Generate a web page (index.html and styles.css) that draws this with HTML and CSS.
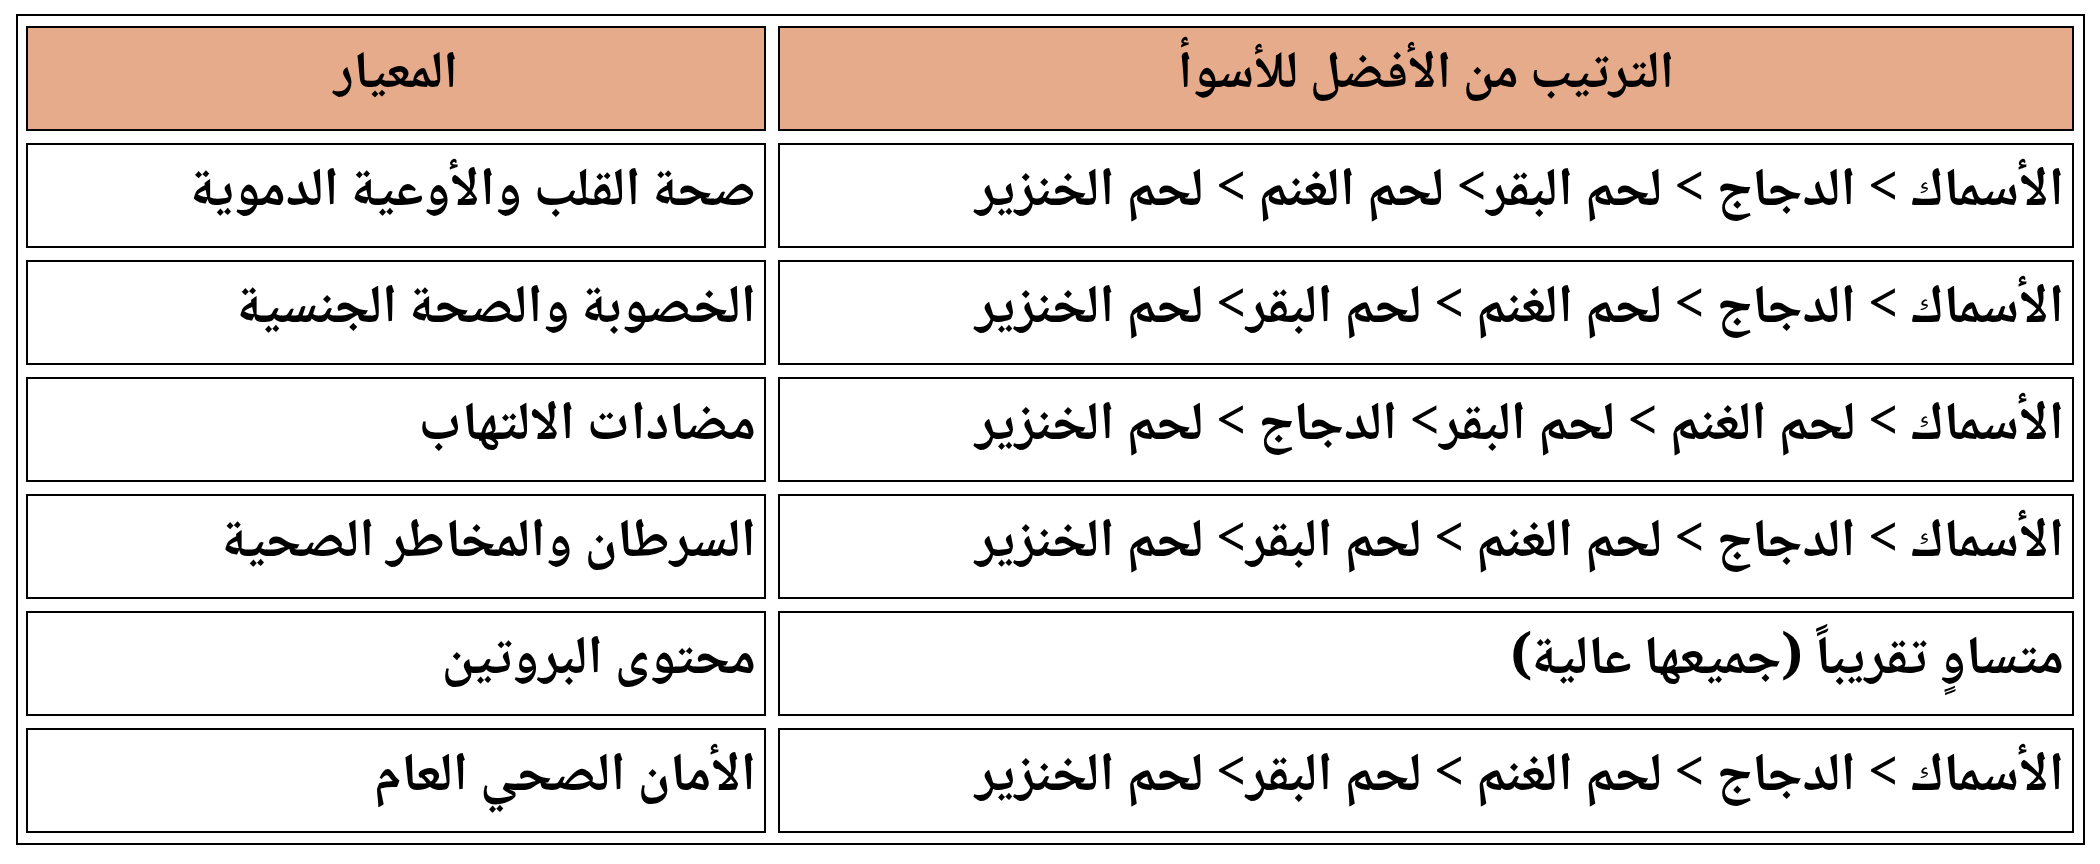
FILE: index.html
```html
<!DOCTYPE html>
<html lang="ar">
<head>
<meta charset="utf-8">
<title>مقارنة اللحوم</title>
<link rel="stylesheet" href="styles.css">
</head>
<body>
<div class="table">
  <div class="cell head">المعيار</div>
  <div class="cell head">الترتيب من الأفضل للأسوأ</div>

  <div class="cell">صحة القلب والأوعية الدموية</div>
  <div class="cell">الأسماك &gt; الدجاج &gt; لحم البقر&gt; لحم الغنم &gt; لحم الخنزير</div>

  <div class="cell">الخصوبة والصحة الجنسية</div>
  <div class="cell">الأسماك &gt; الدجاج &gt; لحم الغنم &gt; لحم البقر&gt; لحم الخنزير</div>

  <div class="cell">مضادات الالتهاب</div>
  <div class="cell">الأسماك &gt; لحم الغنم &gt; لحم البقر&gt; الدجاج &gt; لحم الخنزير</div>

  <div class="cell">السرطان والمخاطر الصحية</div>
  <div class="cell">الأسماك &gt; الدجاج &gt; لحم الغنم &gt; لحم البقر&gt; لحم الخنزير</div>

  <div class="cell">محتوى البروتين</div>
  <div class="cell">متساوٍ تقريباً (جميعها عالية)</div>

  <div class="cell">الأمان الصحي العام</div>
  <div class="cell">الأسماك &gt; الدجاج &gt; لحم الغنم &gt; لحم البقر&gt; لحم الخنزير</div>
</div>
</body>
</html>
```

FILE: styles.css
```css
html, body {
  margin: 0;
  padding: 0;
  background: #ffffff;
}

body {
  font-family: "Noto Naskh Arabic", "Noto Sans Arabic", "DejaVu Sans", sans-serif;
  color: #000000;
}

.table {
  box-sizing: border-box;
  width: 2069px;
  margin: 14px 0 0 16px;
  border: 2px solid #000000;
  padding: 10px 9px 10px 8px;
  display: grid;
  grid-template-columns: 740px 1fr;
  grid-auto-rows: 105px;
  gap: 12px;
}

.cell {
  box-sizing: border-box;
  border: 2px solid #000000;
  direction: rtl;
  display: flex;
  align-items: center;
  justify-content: flex-start;
  padding: 0 8px 4px 8px;
  font-size: 54px;
  line-height: 1.2;
  font-weight: bold;
  white-space: nowrap;
  overflow: hidden;
}

.head {
  background: #e5ab8a;
  justify-content: center;
  font-size: 52px;
}
```
